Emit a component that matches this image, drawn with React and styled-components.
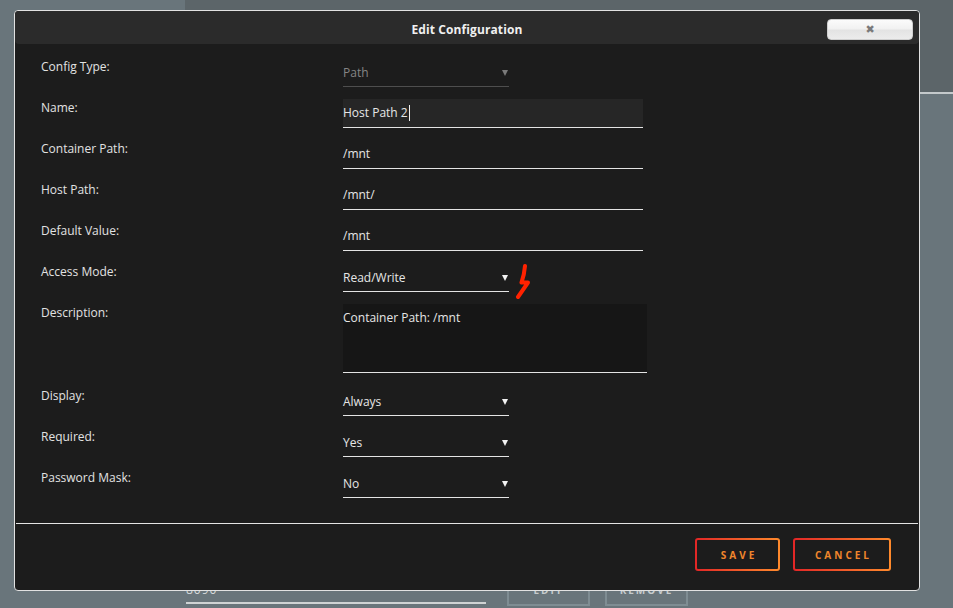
import React from "react";
import styled, { createGlobalStyle } from "styled-components";

const Global = createGlobalStyle`
  html, body {
    margin: 0;
    padding: 0;
    background: #69757b;
  }
  body {
    font-family: "Open Sans", "Noto Sans", sans-serif;
    -webkit-font-smoothing: antialiased;
  }
`;

const fields = [
  { label: "Config Type:", kind: "select", value: "Path", disabled: true },
  { label: "Name:", kind: "input", value: "Host Path 2", focused: true },
  { label: "Container Path:", kind: "input", value: "/mnt" },
  { label: "Host Path:", kind: "input", value: "/mnt/" },
  { label: "Default Value:", kind: "input", value: "/mnt" },
  { label: "Access Mode:", kind: "select", value: "Read/Write", marked: true },
  { label: "Description:", kind: "textarea", value: "Container Path: /mnt" },
  { label: "Display:", kind: "select", value: "Always" },
  { label: "Required:", kind: "select", value: "Yes" },
  { label: "Password Mask:", kind: "select", value: "No" }
];

export default function App() {
  return (
    <>
      <Global />
      <Page>
        <TopBand />
        <BottomRow>
          <BackField>8090</BackField>
          <BackButton>EDIT</BackButton>
          <BackButton>REMOVE</BackButton>
        </BottomRow>

        <Modal>
          <TitleBar>
            <span />
            <Title>Edit Configuration</Title>
            <CloseButton>✖</CloseButton>
          </TitleBar>

          <Body>
            {fields.map(f => (
              <Row key={f.label} $tall={f.kind === "textarea"}>
                <Label>{f.label}</Label>
                {f.kind === "select" && (
                  <Select $disabled={f.disabled}>
                    {f.value}
                    <Arrow $disabled={f.disabled} />
                  </Select>
                )}
                {f.kind === "input" && (
                  <TextInput $focused={f.focused}>
                    {f.value}
                    {f.focused && <Caret />}
                  </TextInput>
                )}
                {f.kind === "textarea" && <TextArea>{f.value}</TextArea>}
                {f.marked && (
                  <Mark width="18" height="36" viewBox="0 0 18 36">
                    <path
                      d="M11 2 C10.5 8 9.5 13 7.5 18.5 L14 18.5 L4 33"
                      fill="none"
                      stroke="#ff2200"
                      strokeWidth="4"
                      strokeLinecap="round"
                      strokeLinejoin="round"
                    />
                  </Mark>
                )}
              </Row>
            ))}
          </Body>

          <Divider />

          <Footer>
            <ActionButton $w={85}>SAVE</ActionButton>
            <ActionButton $w={98}>CANCEL</ActionButton>
          </Footer>
        </Modal>
      </Page>
    </>
  );
}

const Page = styled.div`
  position: relative;
  width: 953px;
  height: 608px;
  overflow: hidden;
  display: flex;
  flex-direction: column;
  justify-content: space-between;
`;

const TopBand = styled.div`
  margin-left: 185px;
  height: 92px;
  background: #5c6569;
  border-bottom: 2px solid #c4c9cb;
`;

const BottomRow = styled.div`
  display: flex;
  align-items: flex-end;
  padding-left: 186px;
  padding-bottom: 2px;
`;

const BackField = styled.div`
  width: 300px;
  height: 24px;
  line-height: 24px;
  font-size: 12px;
  color: #d5d9da;
  letter-spacing: 1px;
  border-bottom: 2px solid #cfd3d4;
  margin-bottom: 2px;
`;

const BackButton = styled.div`
  width: 79px;
  height: 28px;
  margin-left: 21px;
  border: 2px solid #7f8d93;
  display: flex;
  align-items: center;
  justify-content: center;
  font-size: 10px;
  font-weight: 700;
  letter-spacing: 2px;
  color: #c5cbcd;

  & + & {
    margin-left: 15px;
  }
`;

const Modal = styled.div`
  position: absolute;
  left: 14px;
  top: 10px;
  width: 904px;
  background: #1c1c1c;
  border: 1px solid #e2e2e2;
  border-radius: 4px;
  display: flex;
  flex-direction: column;
`;

const TitleBar = styled.div`
  height: 33px;
  box-sizing: border-box;
  padding-top: 4px;
  background: #2b2b2b;
  border-radius: 4px;
  display: grid;
  grid-template-columns: 1fr auto 1fr;
  align-items: center;
`;

const Title = styled.div`
  font-size: 12px;
  font-weight: 700;
  color: #f0f0f0;
  letter-spacing: 0.1px;
`;

const CloseButton = styled.div`
  justify-self: end;
  margin-right: 6px;
  width: 84px;
  height: 19px;
  border: 1px solid #cfcfcf;
  border-radius: 4px;
  background: linear-gradient(#fbfbfb, #f1f1f1 48%, #e3e3e3 52%, #ececec);
  display: flex;
  align-items: center;
  justify-content: center;
  font-size: 11px;
  color: #7a7a7a;
  font-family: "DejaVu Sans", sans-serif;
`;

const Body = styled.div`
  padding: 14px 0 25px 26px;
  display: flex;
  flex-direction: column;
  gap: 12px;
`;

const Row = styled.div`
  display: flex;
  align-items: flex-start;
  min-height: 29px;
  margin-bottom: ${p => (p.$tall ? "2px" : "0")};
`;

const Label = styled.div`
  width: 302px;
  flex-shrink: 0;
  font-size: 12px;
  line-height: 18px;
  color: #e2e2e2;
`;

const Select = styled.div`
  position: relative;
  width: 166px;
  height: 28px;
  line-height: 29px;
  font-size: 12px;
  color: ${p => (p.$disabled ? "#858585" : "#e6e6e6")};
  border-bottom: 1px solid ${p => (p.$disabled ? "#4e4e4e" : "#e4e4e4")};
`;

const Arrow = styled.span`
  position: absolute;
  right: 1px;
  top: 12px;
  width: 0;
  height: 0;
  border-left: 3px solid transparent;
  border-right: 3px solid transparent;
  border-top: 6px solid ${p => (p.$disabled ? "#7a7a7a" : "#f2f2f2")};
`;

const TextInput = styled.div`
  width: 300px;
  height: 28px;
  line-height: 28px;
  font-size: 12px;
  color: #e6e6e6;
  background: ${p => (p.$focused ? "#262626" : "transparent")};
  border-bottom: 1px solid #e4e4e4;
  display: flex;
  align-items: center;
`;

const Caret = styled.span`
  width: 1px;
  height: 16px;
  margin-left: 1px;
  background: #f0f0f0;
`;

const TextArea = styled.div`
  width: 304px;
  height: 69px;
  padding-top: 5px;
  box-sizing: border-box;
  font-size: 12px;
  line-height: 18px;
  color: #e6e6e6;
  background: #161616;
  border-bottom: 1px solid #e4e4e4;
`;

const Mark = styled.svg`
  margin-left: 5px;
  margin-top: 1px;
  margin-bottom: -8px;
`;

const Divider = styled.div`
  height: 1px;
  margin: 0 1px;
  background: #e4e4e4;
`;

const Footer = styled.div`
  display: flex;
  justify-content: flex-end;
  gap: 13px;
  padding: 14px 28px 19px 0;
`;

const ActionButton = styled.div`
  width: ${p => p.$w}px;
  height: 33px;
  box-sizing: border-box;
  border: 2px solid transparent;
  border-radius: 3px;
  background: linear-gradient(#1c1c1c, #1c1c1c) padding-box,
    linear-gradient(90deg, #e22626, #ff8a2c) border-box;
  display: flex;
  align-items: center;
  justify-content: center;
  font-size: 10px;
  font-weight: 700;
  letter-spacing: 3px;
  padding-left: 3px;
  color: #f0862c;
`;
